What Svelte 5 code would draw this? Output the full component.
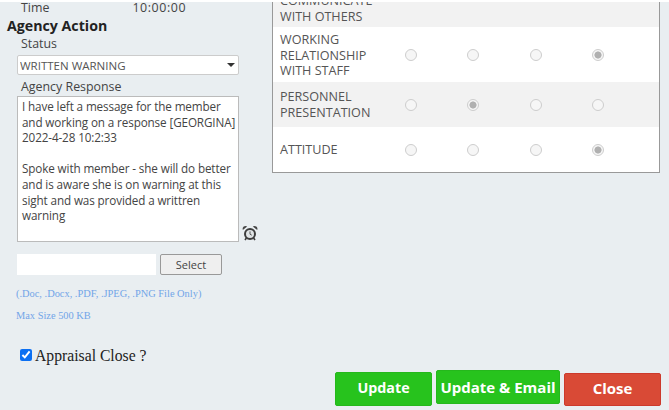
<script lang="ts">
	const ratings = [
		{ label: ["COMMUNICATE", "WITH OTHERS"], picked: 3, cls: "clipped" },
		{ label: ["WORKING", "RELATIONSHIP", "WITH STAFF"], picked: 3, cls: "tall" },
		{ label: ["PERSONNEL", "PRESENTATION"], picked: 1, cls: "mid" },
		{ label: ["ATTITUDE"], picked: 3, cls: "mid" }
	];
	const response = `I have left a message for the member
and working on a response [GEORGINA]
2022-4-28 10:2:33

Spoke with member - she will do better
and is aware she is on warning at this
sight and was provided a writtren
warning`;
</script>

<div class="page">
	<div class="columns">
		<section class="left">
			<div class="time-row">
				<span>Time</span>
				<span class="time-value">10:00:00</span>
			</div>
			<h2>Agency Action</h2>
			<div class="field-label">Status</div>
			<div class="status-wrap">
				<select class="status">
					<option>WRITTEN WARNING</option>
				</select>
			</div>
			<div class="field-label response-label">Agency Response</div>
			<div class="response-row">
				<textarea class="response" wrap="off" readonly value={response}></textarea>
				<svg class="alarm" viewBox="0 0 16 16" width="16" height="16" aria-hidden="true">
					<circle cx="8" cy="9" r="5" fill="#dfe3e5" stroke="#3c3c3c" stroke-width="2" />
					<path d="M0.8 5 A3 3 0 0 1 5.2 1.4 Z" fill="#444" />
					<path d="M15.2 5 A3 3 0 0 0 10.8 1.4 Z" fill="#444" />
					<path d="M8 6.4 V9.2 L9.8 10.2" fill="none" stroke="#555" stroke-width="1" />
					<path d="M4.4 13 L3 15 M11.6 13 L13 15" stroke="#3c3c3c" stroke-width="1.6" />
				</svg>
			</div>
			<div class="file-row">
				<input class="file-name" type="text" />
				<button class="select-btn">Select</button>
			</div>
			<p class="hint first">(.Doc, .Docx, .PDF, .JPEG, .PNG File Only)</p>
			<p class="hint second">Max Size 500 KB</p>
			<label class="close-check">
				<input type="checkbox" checked />
				<span>Appraisal Close ?</span>
			</label>
		</section>

		<section class="ratings">
			{#each ratings as row}
				<div class="rating {row.cls}">
					<div class="rating-label">
						{#each row.label as line}
							<div>{line}</div>
						{/each}
					</div>
					{#each [0, 1, 2, 3] as i}
						<span class="radio-cell"><input type="radio" disabled checked={row.picked === i} /></span>
					{/each}
				</div>
			{/each}
		</section>
	</div>

	<div class="actions">
		<button class="action update">Update</button>
		<button class="action email">Update &amp; Email</button>
		<button class="action close">Close</button>
	</div>
</div>

<style>
	:global(body) {
		margin: 0;
		background: #e9eef1;
	}

	.page {
		width: 669px;
		height: 410px;
		overflow: hidden;
		position: relative;
		box-sizing: border-box;
		border-top: 2px solid #fff;
		background: #e9eef1;
		font-family: "Open Sans", "Noto Sans", sans-serif;
		color: #444;
	}

	.columns {
		display: grid;
		grid-template-columns: 272px 388px;
	}

	.left {
		padding-left: 16px;
		font-size: 12.4px;
	}

	.time-row {
		display: flex;
		padding: 1px 0 0 5px;
		line-height: 10px;
		color: #444;
	}

	.time-value {
		margin-left: 83px;
		letter-spacing: 0.6px;
	}

	h2 {
		margin: 4px 0 0 -9px;
		font-size: 14.2px;
		line-height: 18px;
		font-weight: 700;
		color: #222;
	}

	.field-label {
		padding-left: 5px;
		line-height: 16px;
		margin-top: 1px;
	}

	.status-wrap {
		position: relative;
		width: 222px;
		margin: 3px 0 0 1px;
	}

	.status-wrap::after {
		content: "";
		position: absolute;
		right: 4px;
		top: 8px;
		border-left: 4px solid transparent;
		border-right: 4px solid transparent;
		border-top: 4px solid #333;
		pointer-events: none;
	}

	.status {
		display: block;
		width: 100%;
		height: 20px;
		padding: 0 0 0 2px;
		box-sizing: border-box;
		appearance: none;
		border: 1px solid #ccc;
		border-radius: 2px;
		background: #fff;
		font: 11.5px "Open Sans", sans-serif;
		color: #555;
	}

	.response-label {
		margin-top: 4px;
	}

	.response-row {
		display: flex;
		align-items: flex-end;
		margin: 1px 0 0 1px;
	}

	.response {
		width: 222px;
		height: 146px;
		box-sizing: border-box;
		padding: 2px 4px;
		border: 1px solid #bbb;
		border-radius: 0;
		background: #fff;
		resize: none;
		overflow: hidden;
		outline: none;
		font: 11.7px/15.6px "Open Sans", sans-serif;
		letter-spacing: -0.12px;
		color: #444;
	}

	.alarm {
		margin: 0 0 1px 3px;
	}

	.file-row {
		display: flex;
		gap: 4px;
		margin: 12px 0 0 1px;
	}

	.file-name {
		width: 139px;
		height: 21px;
		box-sizing: border-box;
		border: none;
		background: #fff;
		padding: 0;
	}

	.select-btn {
		width: 62px;
		height: 21px;
		box-sizing: border-box;
		padding: 0;
		border: 1px solid #999;
		border-radius: 2px;
		background: #efefef;
		font: 11px "Open Sans", sans-serif;
		color: #444;
	}

	.hint {
		margin: 0;
		font-family: "Liberation Serif", serif;
		font-size: 10.4px;
		line-height: 12px;
		color: #72a5e8;
	}

	.hint.first {
		margin-top: 13px;
	}

	.hint.second {
		margin-top: 10px;
	}

	.close-check {
		display: flex;
		align-items: center;
		gap: 3px;
		margin: 25px 0 0 4px;
		font-family: "Liberation Serif", serif;
		font-size: 15.7px;
		color: #222;
	}

	.close-check input {
		width: 12px;
		height: 12px;
		margin: 0 0 3px;
		accent-color: #0b6ff2;
	}

	.ratings {
		height: 171px;
		box-sizing: border-box;
		border: 1px solid #999;
		border-top: none;
		background: #fff;
		overflow: hidden;
	}

	.rating {
		display: grid;
		grid-template-columns: 100px repeat(4, 62.3px);
		align-items: center;
		padding-left: 7px;
		font-size: 12.6px;
		line-height: 15.6px;
		color: #555;
	}

	.rating:nth-child(odd) {
		background: #f2f2f2;
	}

	.clipped {
		height: 46px;
		margin-top: -21px;
	}

	.clipped .rating-label {
		padding-top: 9px;
	}

	.clipped .radio-cell {
		margin-top: -21px;
	}

	.tall {
		height: 55px;
	}

	.tall .rating-label {
		padding-top: 2px;
	}

	.mid {
		height: 45px;
	}

	.radio-cell {
		display: flex;
		justify-content: center;
	}

	.radio-cell input {
		appearance: none;
		width: 12px;
		height: 12px;
		margin: 0;
		box-sizing: border-box;
		border: 1px solid #cdcdcd;
		border-radius: 50%;
		background: #f6f6f6;
	}

	.radio-cell input:checked {
		background: radial-gradient(circle, #b0b0b0 0 3.2px, #f6f6f6 3.9px);
	}

	.actions {
		display: flex;
		justify-content: flex-end;
		gap: 4px;
		padding-right: 8px;
		position: absolute;
		top: 368px;
		right: 0;
	}

	.action {
		height: 34px;
		box-sizing: border-box;
		padding: 0 0 3px;
		border: 1px solid #25b81c;
		border-radius: 2px;
		background: #27c31d;
		font: 700 14.3px "Open Sans", sans-serif;
		color: #fff;
	}

	.update {
		width: 97px;
		margin-top: 2px;
	}

	.email {
		width: 124px;
		font-size: 15px;
		padding-bottom: 1px;
	}

	.close {
		width: 97px;
		height: 33px;
		margin-top: 3px;
		font-size: 15px;
		background: #d94a36;
		border-color: #cc3a2c;
	}
</style>
